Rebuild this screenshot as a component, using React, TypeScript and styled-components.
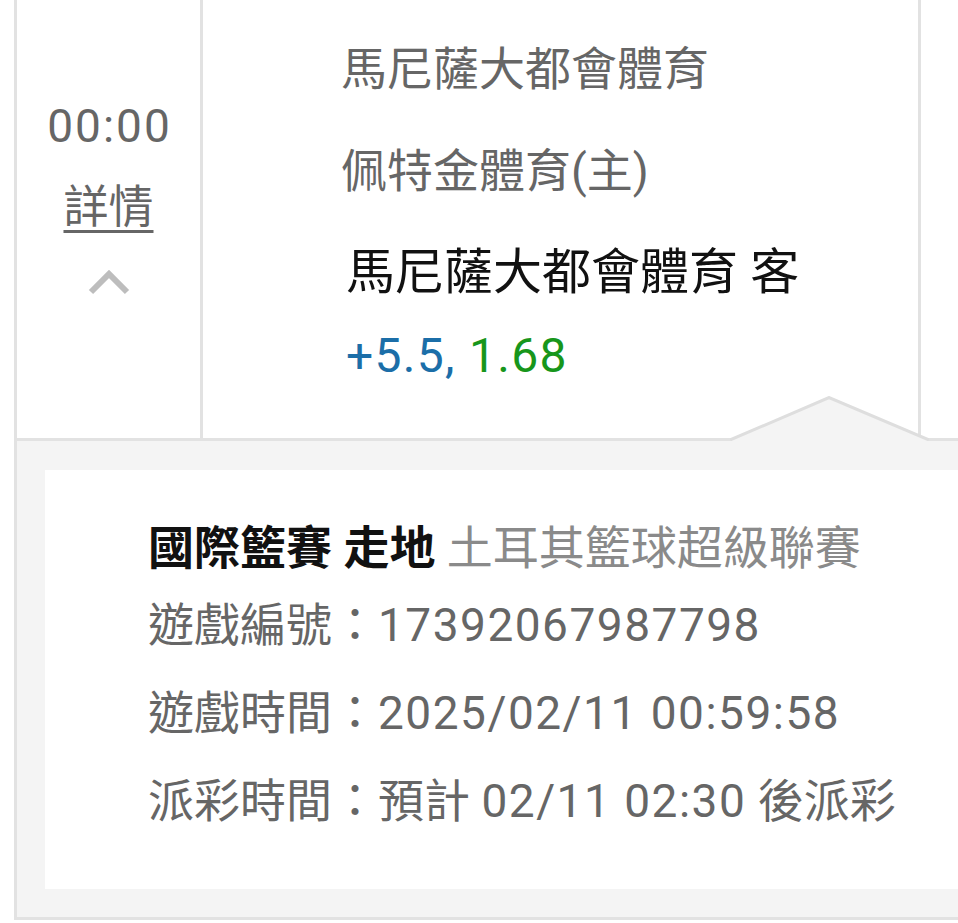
import styled, { createGlobalStyle } from 'styled-components'

const GlobalStyle = createGlobalStyle`
  body {
    margin: 0;
    background: #fff;
    font-family: Roboto, "Noto Sans CJK TC", sans-serif;
  }
`

const Page = styled.div`
  width: 958px;
  height: 923px;
  overflow: hidden;
  padding-left: 14px;
  box-sizing: border-box;
`

const Table = styled.div`
  border-left: 3px solid #e2e2e2;
`

const Row = styled.div`
  position: relative;
  display: flex;
  height: 441px;
  box-sizing: border-box;
  border-bottom: 3px solid #e2e2e2;
`

const TimeCell = styled.div`
  width: 186px;
  flex-shrink: 0;
  box-sizing: border-box;
  border-right: 3px solid #e2e2e2;
  display: flex;
  flex-direction: column;
  align-items: center;
  padding-top: 98px;
`

const Time = styled.div`
  font-size: 46px;
  line-height: 56px;
  letter-spacing: 2px;
  margin-right: -2px;
  color: #666;
`

const DetailLink = styled.a`
  margin-top: 26px;
  font-size: 45px;
  line-height: 56px;
  color: #666;
  text-decoration: underline;
  text-decoration-thickness: 3px;
  text-underline-offset: 7px;
`

const Chevron = styled.svg`
  margin-top: 32px;
  display: block;
`

const MainCell = styled.div`
  width: 718px;
  flex-shrink: 0;
  box-sizing: border-box;
  border-right: 3px solid #e2e2e2;
  padding: 18px 0 0 138px;
`

const Team = styled.div`
  font-size: 46px;
  line-height: 102px;
  color: #666;
  white-space: nowrap;
`

const Pick = styled.div`
  padding-left: 5px;
  font-size: 49px;
  line-height: 102px;
  color: #111;
  white-space: nowrap;
`

const Odds = styled.div`
  padding-left: 5px;
  font-size: 48px;
  line-height: 64px;
  letter-spacing: 1.3px;
  white-space: nowrap;
`

const Handicap = styled.span`
  color: #1b6ea8;
`

const Price = styled.span`
  color: #17961b;
`

const Caret = styled.svg`
  position: absolute;
  left: 713px;
  top: 396px;
  z-index: 1;
`

const Detail = styled.div`
  background: #f4f4f4;
  padding: 29px 0 28px 28px;
  border-bottom: 3px solid #e2e2e2;
`

const Card = styled.div`
  background: #fff;
  padding: 45px 0 44px 103px;
`

const Heading = styled.div`
  font-size: 46px;
  line-height: 66px;
  white-space: nowrap;
`

const Category = styled.span`
  font-weight: 700;
  color: #111;
`

const League = styled.span`
  color: #8a8a8a;
`

const InfoRow = styled.div`
  font-size: 46px;
  line-height: 88px;
  color: #666;
  white-space: nowrap;
`

const Num = styled.span`
  letter-spacing: 1.5px;
`

export default function App() {
  return (
    <>
      <GlobalStyle />
      <Page>
        <Table>
          <Row>
            <TimeCell>
              <Time>00:00</Time>
              <DetailLink>詳情</DetailLink>
              <Chevron width="44" height="28" viewBox="0 0 44 28">
                <polyline points="4,24 22,6 40,24" fill="none" stroke="#bdbdbd" strokeWidth="6" />
              </Chevron>
            </TimeCell>
            <MainCell>
              <Team>馬尼薩大都會體育</Team>
              <Team>佩特金體育(主)</Team>
              <Pick>馬尼薩大都會體育 客</Pick>
              <Odds>
                <Handicap>+5.5,</Handicap> <Price>1.68</Price>
              </Odds>
            </MainCell>
            <Caret width="199" height="45" viewBox="0 0 199 45">
              <polygon points="0,45 99,1.5 199,45" fill="#f4f4f4" />
              <polyline points="0,44 99,1.5 199,44" fill="none" stroke="#dedede" strokeWidth="3" />
            </Caret>
          </Row>
          <Detail>
            <Card>
              <Heading>
                <Category>國際籃賽 走地</Category> <League>土耳其籃球超級聯賽</League>
              </Heading>
              <InfoRow>遊戲編號：<Num>17392067987798</Num></InfoRow>
              <InfoRow>遊戲時間：<Num>2025/02/11 00:59:58</Num></InfoRow>
              <InfoRow>派彩時間：預計 <Num>02/11 02:30</Num> 後派彩</InfoRow>
            </Card>
          </Detail>
        </Table>
      </Page>
    </>
  )
}
